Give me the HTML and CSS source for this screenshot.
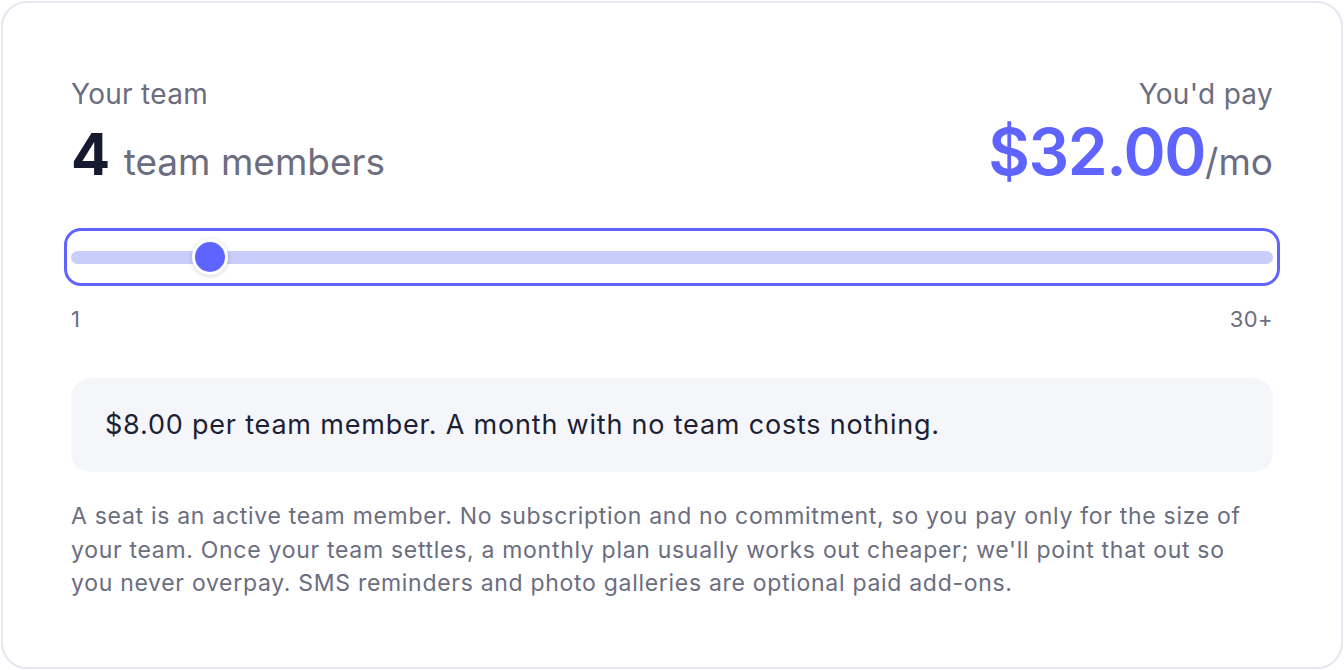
FILE: index.html
```html
<!DOCTYPE html>
<html>
	<head>
		<meta charset="UTF-8">
		<title>Team pricing</title>
		<link rel="stylesheet" href="styles.css">
	</head>
	<body>
		<div class="card">
			<div class="top">
				<div class="team">
					<div class="label">Your team</div>
					<div class="count"><b>4</b> team members</div>
				</div>
				<div class="pay">
					<div class="label">You'd pay</div>
					<div class="price"><span class="amount">$32.00</span>/mo</div>
				</div>
			</div>
			<div class="slider">
				<input type="range" min="1" max="30" value="4" class="range">
			</div>
			<div class="ends">
				<span>1</span>
				<span>30+</span>
			</div>
			<div class="note">$8.00 per team member. A month with no team costs nothing.</div>
			<p class="info">A seat is an active team member. No subscription and no commitment, so you pay only for the size of your team. Once your team settles, a monthly plan usually works out cheaper; we'll point that out so you never overpay. SMS reminders and photo galleries are optional paid add-ons.</p>
		</div>
	</body>
</html>
```
FILE: styles.css
```css
*{margin: 0;padding: 0;box-sizing: border-box;}
body{
	background: #fff;
	font-family: Inter, "Noto Sans", sans-serif;
	color: #6b6d80;
}
.card{
	margin: 1px;
	height: 668px;
	border: 2px solid #e5e7f1;
	border-radius: 26px;
	padding: 74px 68px 0 68px;
}
.top{
	display: flex;
	justify-content: space-between;
	align-items: flex-start;
}
.label{
	font-size: 28px;
	line-height: 34px;
	letter-spacing: 0.3px;
	color: #6b6d80;
}
.count{
	font-size: 37px;
	line-height: 60px;
	margin-top: 13px;
	color: #6b6d80;
}
.count b{
	font-size: 58px;
	font-weight: 700;
	color: #161a30;
	margin-right: 3px;
}
.pay{
	text-align: right;
}
.price{
	font-size: 37px;
	line-height: 60px;
	margin-top: 11px;
}
.amount{
	font-size: 64px;
	font-weight: 600;
	color: #5f63ff;
	letter-spacing: -1.4px;
}
.slider{
	margin-top: 43px;
}
.range{
	display: block;
	width: 100%;
	height: 44px;
	-webkit-appearance: none;
	appearance: none;
	background: transparent;
	outline: 3px solid #5f63ff;
	outline-offset: 4px;
	border-radius: 10px;
}
.range::-webkit-slider-runnable-track{
	height: 13px;
	background: #c8cdf9;
	border-radius: 7px;
}
.range::-webkit-slider-thumb{
	-webkit-appearance: none;
	width: 36px;
	height: 36px;
	margin-top: -11.5px;
	border-radius: 50%;
	background: #5f63ff;
	border: 3px solid #fff;
	box-shadow: 0 1px 4px rgba(30, 35, 80, 0.2);
}
.ends{
	display: flex;
	justify-content: space-between;
	margin-top: 26px;
	font-size: 22px;
	line-height: 28px;
	letter-spacing: 0.4px;
	color: #6b6d80;
}
.note{
	margin-top: 45px;
	background: #f5f6fa;
	border-radius: 20px;
	padding: 30px 34px 31px;
	font-size: 27px;
	line-height: 33px;
	letter-spacing: 0.8px;
	color: #1c1f35;
}
.info{
	margin-top: 28px;
	font-size: 23px;
	line-height: 33.5px;
	letter-spacing: 0.7px;
	color: #6b6d80;
}
```
